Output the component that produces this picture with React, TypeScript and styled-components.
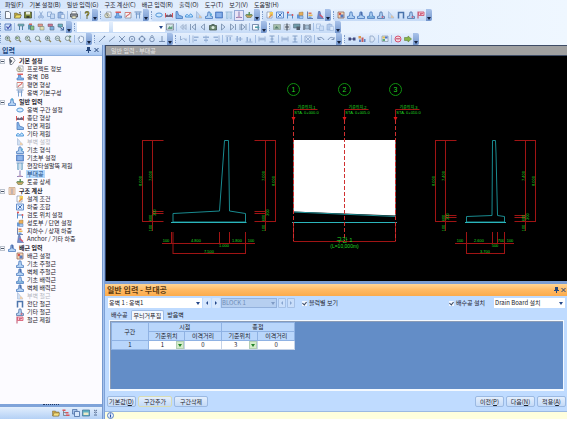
import React from "react";
import styled, { createGlobalStyle, css } from "styled-components";

const GlobalStyle = createGlobalStyle`
  * { box-sizing: border-box; }
  body { margin: 0; background: #fff; }
  body, button, input, select, table {
    font-family: "Noto Sans CJK KR", "Liberation Sans", sans-serif;
    font-size: 6px;
    color: #1c222c;
  }
  button, input, select { margin: 0; padding: 0; border: 0; background: none; }
  ul { list-style: none; margin: 0; padding: 0; }
`;

/* ---------- icons (16 x 16 grid) ---------- */

const B = "#2f66b4";
const footing = (c: string, extra?: React.ReactNode) => (
  <>
    <path d="M6 2h4l1 8 4 1v4H1v-4l4-1z" fill="#a9cdf3" stroke={c} strokeWidth="1.6" />
    {extra}
  </>
);
const lens = (extra?: React.ReactNode) => (
  <>
    <circle cx="7" cy="6.500" r="4.500" fill="#dcebe4" stroke="#5d6f78" strokeWidth="1.600" />
    <path d="M10 10l4 4" stroke="#8c7a3e" strokeWidth="2.400" />
    {extra}
  </>
);
const line = (d: string, c = "#47638c", w = 1.5) => <path d={d} fill="none" stroke={c} strokeWidth={w} />;

const drawings: Record<string, React.ReactNode> = {
  new: <path d="M3 1h7l3 3v11H3z" fill="#fff" stroke="#3d4654" strokeWidth="1.6" />,
  open: <><path d="M1 4h5l2 2h5v8H1z" fill="#b89a20" stroke="#4d4510" /><path d="M4 8h11l-3 6H1z" fill="#f4dc4c" stroke="#4d4510" /><path d="M10 3l4 1" stroke="#222" strokeWidth="1.5" /></>,
  save: <><path d="M1 2h14v12H1z" fill="#6d7818" stroke="#2b3010" strokeWidth="1.5" /><path d="M4 2h8v5H4z" fill="#e9ecd4" /><path d="M5 10h6v4H5z" fill="#20240c" /></>,
  cut: <>{line("M5 1l5 9M11 1L6 10", "#6c90c4")}<circle cx="5" cy="12" r="2" fill="none" stroke="#6c90c4" strokeWidth="1.5" /><circle cx="11" cy="12" r="2" fill="none" stroke="#6c90c4" strokeWidth="1.5" /></>,
  copy: <><path d="M1 2h8v9H1z" fill="#dce9fa" stroke="#6c90c4" strokeWidth="1.4" /><path d="M7 6h8v9H7z" fill="#c2d7f3" stroke="#6c90c4" strokeWidth="1.4" /></>,
  paste: <><path d="M2 3h10v11H2z" fill="#8fb0de" stroke="#5e84bd" strokeWidth="1.4" /><path d="M5 1h4v3H5z" fill="#5e84bd" /><path d="M8 7h7v8H8z" fill="#e4eefb" stroke="#5e84bd" /></>,
  print: <><path d="M4 1h8l1 5H3z" fill="#fff" stroke="#444" /><path d="M1 6h14v6H1z" fill="#8b8d92" stroke="#2c2d30" strokeWidth="1.5" /><path d="M4 10h8v5H4z" fill="#efe9b8" stroke="#333" /></>,
  help: <>{line("M5 5c0-5 7-4 6 0 0 2-3 3-3 6", "#2c2d08", 3.4)}{line("M5 5c0-5 7-4 6 0 0 2-3 3-3 6", "#d8c926", 1.4)}<circle cx="8" cy="14" r="1.600" fill="#45430e" /></>,
  project: <><path d="M5 2h9v11H5z" fill="#fff" stroke="#6b7280" strokeWidth="1.3" /><circle cx="6" cy="9" r="4.500" fill="#e7e6c8" stroke="#7c7a5e" strokeWidth="1.4" />{line("M6 6v3l2 1", "#345")}</>,
  wallDb: <><path d="M5 4h4l1 6h5v4H2v-4h3z" fill="#6aa5e6" stroke={B} strokeWidth="1.3" /><path d="M3 1h11v3H3z" fill="#dd4444" /></>,
  plan: <><path d="M2 3h12v11H2z" fill="#fff6f4" stroke="#6a6b74" strokeWidth="1.3" />{line("M4 12c1-6 7-2 8-8", "#cc3b3b", 2)}{line("M2 3h12", "#d46a5f", 2)}</>,
  pillars: <>{line("M1 2h14M3 6h10", "#567fb5", 2)}{line("M5 3v12M11 3v12", "#6a93c6", 2)}</>,
  ring: <ellipse cx="8" cy="8" rx="6.500" ry="4" fill="#cfeaff" stroke="#3f88d0" strokeWidth="2" />,
  profile: <><path d="M1 4v9M15 4v9" stroke="#d53838" strokeWidth="2" /><path d="M2 12V8l3-1 2 2 4-3 3 2v4z" fill="#5a4a63" /></>,
  section: <path d="M2 1h3l2 7 8 3v4H2z" fill="#77aee8" stroke={B} strokeWidth="1.6" />,
  wave: <path d="M1 12c0-6 4-6 6-3s3-5 5-3 3 3 3 6z" fill="#bfe2ff" stroke="#2e86d4" strokeWidth="2" />,
  buttress: <><path d="M3 1l11 13H3z" fill="#a9c6e8" stroke="#5c83b6" strokeWidth="1.4" /><path d="M8 8l5 3v3H8z" fill="#e0a35c" /></>,
  foot: footing(B, <path d="M10 5h4v4h-4z" fill="#49a3cf" />),
  block: <><path d="M1 2h14v12H1z" fill="#4f87da" stroke="#2d5cab" strokeWidth="1.4" /><path d="M3 6h10M3 10h10" stroke="#cbe0fa" strokeWidth="1.5" /></>,
  piles: <><path d="M1 2h14" stroke="#5b86ba" strokeWidth="2" /><path d="M3 3h3v12H3zM10 3h3v12h-3z" fill="#b7d9ee" stroke="#4d8bb4" strokeWidth="1.2" /></>,
  fixture: <>{line("M8 1v11M2 13h12", "#7a6fae", 2.2)}<path d="M5 11h6v2H5z" fill="#d08fa8" /></>,
  earth: <><path d="M1 8h14l-3 5H4z" fill="#c49a48" stroke="#5a6c35" strokeWidth="1.3" /><path d="M7 2h3v7H7z" fill="#4f8a45" /><path d="M2 7h12" stroke="#3f7a3a" strokeWidth="1.6" /></>,
  calc: <><path d="M2 1h12v14H2z" fill="#fbe5cf" stroke="#b98a62" strokeWidth="1.4" /><path d="M4 4h8M4 8h8M4 12h8" stroke="#d58556" strokeWidth="1.8" /><path d="M8 3v11" stroke="#5f86b9" strokeWidth="1.4" /></>,
  design: <><path d="M2 2h10v12H2z" fill="#fff" stroke="#667799" strokeWidth="1.3" /><path d="M7 2h7v7H7z" fill="#f2c53c" /><path d="M5 12l6-6 2 2-6 6z" fill="#dd8434" /></>,
  load: <><path d="M1 2h14v12H1z" fill="#d6e8ff" stroke="#3d70bd" strokeWidth="1.8" />{line("M4 12l8-8M5 5l6 6", "#2a5fae", 2)}</>,
  locate: <>{line("M3 2v13M13 7v8M3 8h10", "#3a7ac0", 2)}<circle cx="4" cy="3" r="2.200" fill="#dd3b3b" /><circle cx="13" cy="8" r="1.800" fill="#dd3b3b" /></>,
  embank: <><path d="M2 7h5v8H2z" fill="#4f88d0" /><path d="M6 3l8-1v7H6z" fill="#e7a23c" stroke="#91662b" /><path d="M7 10h7v5H7z" fill="#9fc4ed" stroke={B} /></>,
  water: <><path d="M3 1v14h11" fill="none" stroke="#46619a" strokeWidth="1.8" /><path d="M5 3h6v3H5z" fill="#e0633a" /><path d="M5 7h8v3H5z" fill="#edb23e" /><path d="M5 11h6v3H5z" fill="#5b96d8" /></>,
  anchor: <><path d="M5 1h3l2 9 5 5H3z" fill="#5f7fc6" stroke="#344f96" strokeWidth="1.2" />{line("M7 7l7 6", "#d93a4c", 2.2)}</>,
  rebarSet: <><path d="M2 2h12v12H2z" fill="#f6d4a8" stroke="#814f3a" strokeWidth="1.5" /><circle cx="6" cy="6" r="2.500" fill="#d23b32" /><path d="M7 7h6v6H7z" fill="#3d67b6" /></>,
  rebarA: footing(B),
  rebarB: footing(B, <path d="M7 2h3v7H7z" fill="#35579d" />),
  rebarC: footing(B, <path d="M2 12h12" stroke="#3b84b9" strokeWidth="2" />),
  rebarD: footing("#37609c", <circle cx="11" cy="12" r="2" fill="#bb5570" />),
  stirrup: <path d="M3 15V3h10v12" fill="none" stroke="#2f5e9e" strokeWidth="3" />,
  flag: <><path d="M2 1v14" stroke="#b43455" strokeWidth="2" /><path d="M3 2h11v7H3z" fill="#f5bcc7" stroke="#cf3552" strokeWidth="1.6" />{line("M6 5h6M6 7h3", "#b93253")}</>,
  wallGroup: footing(B, <path d="M7 1h3v4H7z" fill="#2a9fd0" />),
  check: <><path d="M2 2h12v12H2z" fill="#cfe0fb" stroke="#3b68b2" strokeWidth="1.8" />{line("M5 7l3 4 6-8", "#1e2f99", 2.4)}</>,
  tableT: <><path d="M2 2h12v4H2z" fill="#5ea9b2" stroke="#456" />{line("M5 6v8M11 6v8", "#3e6f93", 2)}</>,
  sheetG: <><path d="M2 3h8v10H2z" fill="#4b86a6" /><path d="M7 6h7v8H7z" fill="#7ec06d" stroke="#344" /><path d="M4 1h6v3H4z" fill="#cc5148" /></>,
  sheetR: <><path d="M2 2h9v5H2z" fill="#de8a7b" stroke="#743" /><path d="M6 7h8v7H6z" fill="#e4dfa8" stroke="#565" /></>,
  sheetP: <><path d="M2 2h9v5H2z" fill="#c4647e" stroke="#634" /><path d="M6 7h8v7H6z" fill="#71a5d8" stroke="#345" /></>,
  sheetB: <><path d="M2 2h9v6H2z" fill="#56a7b4" stroke="#345" />{line("M5 8l8 6M13 8v6H7", "#2f5590", 2)}</>,
  picture: <><path d="M1 2h14v12H1z" fill="#d9e8e9" stroke="#667" strokeWidth="1.4" /><path d="M3 12l4-6 3 3 3-5v8z" fill="#4c9168" /></>,
  rewind: line("M14 3L9 8l5 5zM8 3L3 8l5 5z", "#8297b5"),
  first: line("M13 2L6 8l7 6zM3 2v12", "#60789b", 1.6),
  prev: line("M11 2L4 8l7 6z", "#60789b", 1.6),
  next: line("M5 2l7 6-7 6z", "#60789b", 1.6),
  last: line("M3 2l7 6-7 6zM13 2v12", "#60789b", 1.6),
  step: line("M2 2v12M5 2l7 6-7 6zM14 2v12", "#60789b", 1.6),
  camera: <><path d="M1 5h14v9H1z" fill="#5b7a58" stroke="#26382c" strokeWidth="1.5" /><path d="M5 2h6v3H5z" fill="#3f5a46" /><circle cx="8" cy="9" r="3" fill="#dfeee0" /></>,
  export: <><path d="M1 3h12v11H1z" fill="#fff" stroke="#47638c" strokeWidth="1.6" /><path d="M6 7h5V4l4 5-4 4v-3H6z" fill="#3c8f9b" /></>,
  viewA: <><path d="M1 3h14v10H1z" fill="#9bb79d" stroke="#66766a" /><path d="M3 11l4-5 5 5z" fill="#416c57" /></>,
  viewB: <><path d="M2 3h12v10H2z" fill="#d6dde4" stroke="#8896a4" />{line("M8 1v14M4 8h8", "#333b46", 2.4)}</>,
  viewC: <><path d="M1 2h13v8H1z" fill="#5f8f9c" stroke="#345" /><path d="M7 7h7v7H7z" fill="#3c4753" /></>,
  viewD: <>{line("M2 2v12M14 2v12", "#333f4e", 2.4)}<path d="M4 4h8v8H4z" fill="#9db9cf" stroke="#456" /></>,
  zoomFit: lens(line("M4 6h6M7 4v5", "#47614a")),
  zoomWin: lens(<path d="M4 4h5v4H4z" fill="#7c9a6c" />),
  zoomPrev: lens(line("M9 4L5 6l4 3", "#47614a")),
  zoom: lens(),
  zoomIn: lens(line("M4.5 6.500h5M7 4v5", "#3b5560")),
  zoomOut: lens(line("M4.5 6.500h5", "#3b5560")),
  zoomDyn: lens(<path d="M10 1l5 1-3 4z" fill="#3d6b40" />),
  hand: <path d="M3 9L2 6l2-1 1 2V3l2-1 1 1 2-1 1 2h2v7l-3 4H6z" fill="#eef4fc" stroke="#62799b" strokeWidth="1.3" />,
  lineEnd: <>{line("M2 14L13 3", "#47638c")}<circle cx="13" cy="3" r="1.500" fill="#47638c" /></>,
  lineMid: line("M2 13L14 3"),
  cross: line("M2 2l12 12M14 2L2 14"),
  circleC: <><circle cx="8" cy="8" r="5.500" fill="none" stroke="#47638c" strokeWidth="1.500" /><circle cx="8" cy="8" r="1.500" fill="#47638c" /></>,
  circleQ: <><circle cx="8" cy="8" r="5" fill="none" stroke="#47638c" strokeWidth="1.500" />{line("M8 1v3M8 12v3M1 8h3M12 8h3", "#47638c", 2)}</>,
  tangent: <><circle cx="8" cy="9" r="4.500" fill="none" stroke="#47638c" strokeWidth="1.500" />{line("M5 3l3-2 3 2")}</>,
  perp: line("M8 2v11M2 13h12"),
  snap: line("M3 2v8l4-2M9 6l5 5v-4", "#7593bd"),
  alignL: <>{line("M2 1v14", "#7d9ac4")}<path d="M4 3h9v3H4zM4 9h6v3H4z" fill="#8ca9d3" /></>,
  alignC: <>{line("M8 1v14", "#7d9ac4")}<path d="M2 3h12v3H2zM4 9h8v3H4z" fill="#8ca9d3" /></>,
  alignR: <>{line("M14 1v14", "#7d9ac4")}<path d="M3 3h9v3H3zM6 9h6v3H6z" fill="#8ca9d3" /></>,
  alignT: <>{line("M1 2h14", "#7d9ac4")}<path d="M3 4h3v10H3zM9 4h3v7H9z" fill="#8ca9d3" /></>,
  alignM: <>{line("M1 8h14", "#7d9ac4")}<path d="M3 2h3v12H3zM9 4h3v8H9z" fill="#8ca9d3" /></>,
  alignB: <>{line("M1 14h14", "#7d9ac4")}<path d="M3 4h3v9H3zM9 7h3v6H9z" fill="#8ca9d3" /></>,
  spanH: line("M2 3v10M14 3v10M2 8h12M6 5v6M10 5v6", "#7d9ac4", 1.6),
  spanV: line("M3 2h10M3 14h10M8 2v12M5 8h6", "#6c8cba", 1.8),
  extents: <><path d="M2 2h12v12H2z" fill="none" stroke="#7d9ac4" strokeWidth="1.600" />{line("M4 4l8 8M12 4l-8 8", "#7d9ac4")}</>,
  undo: line("M2 8c3-5 9-4 12 2M2 4v5h5", "#7089b0", 2),
  redo: line("M14 8c-3-5-9-4-12 2M14 4v5H9", "#7089b0", 2),
  link: <><path d="M1 5h5v6H1zM10 5h5v6h-5z" fill="#27306c" />{line("M5 8h6", "#27306c", 2)}</>,
  layers: <><path d="M1 2h5v5H1z" fill="#de8d32" /><path d="M7 5h4v9H7z" fill="#c24545" /><path d="M2 9h4v5H2zM12 8h3v6h-3z" fill="#4b72ba" /></>,
  copyPage: <path d="M4 2h6l4 6-4 6H4z" fill="#dbe6f5" stroke="#8199bd" strokeWidth="1.6" />,
  palette: <><path d="M2 2h12v11H2z" fill="#e9eef7" stroke="#567" /><path d="M3 3h5v4H3z" fill="#e4bc39" /><path d="M8 3h5v4H8z" fill="#3b66c0" /><path d="M3 8h5v4H3z" fill="#4da264" /></>,
  stop: <><circle cx="8" cy="8" r="6" fill="#fbd3da" stroke="#d63c5c" strokeWidth="2" />{line("M4 9l2-3 2 3 2-3 2 3", "#b42f50", 1.6)}</>,
  go: <path d="M1 5h7V2l7 6-7 6v-3H1z" fill="#7cae28" stroke="#4d721b" strokeWidth="1.2" />,
  note: <><path d="M4 1h6l4 6-6 8H4z" fill="#fff" stroke="#4a5260" strokeWidth="1.5" /><path d="M2 2l7 6-5 6z" fill="#39424f" /></>,
  folder: <><path d="M1 4h6l1 2h6v8H1z" fill="#c99b28" stroke="#6b5418" /><path d="M4 8h11l-2 6H2z" fill="#ffe066" stroke="#6b5418" /></>,
  tree: <>{line("M3 2v11h8M3 7h6", "#555", 1.4)}<path d="M1 1h6v3H1zM7 6h6v3H7zM8 11h7v3H8z" fill="#dd3f3f" /></>,
  stack: <><path d="M1 1h9v9H1z" fill="#9dbde8" stroke="#2f5693" strokeWidth="1.4" /><path d="M5 5h10v10H5z" fill="#d9e8fb" stroke="#2f5693" strokeWidth="1.6" /></>,
  pane: <><path d="M1 2h14v12H1z" fill="#4ba8b8" stroke="#2b5d84" strokeWidth="1.4" /><path d="M3 7h10v5H3z" fill="#f2ecc0" /></>,
  more: line("M4 2l3 2 3-2M4 6l3 2 3-2M4 12h6", "#223a66", 1.6),
};

const Svg = styled.svg<{ $faded?: boolean }>`
  width: 8px;
  height: 8px;
  flex: none;
  display: block;
  opacity: ${(p) => (p.$faded ? 0.5 : 0.85)};
`;

const Icon = ({ name, faded }: { name: string; faded?: boolean }) => (
  <Svg viewBox="0 0 16 16" $faded={faded} aria-hidden="true">
    {drawings[name]}
  </Svg>
);

/* ---------- frame ---------- */

const Shell = styled.div`
  display: flex;
  flex-direction: column;
  height: 100vh;
  padding-bottom: 4px;
  overflow: hidden;
`;
const Top = styled.header`
  background: linear-gradient(90deg, #d3e4fb, #e6f1fe 45%, #eff7ff);
`;
const Menu = styled.nav`
  display: flex;
  gap: 6px;
  height: 9px;
  padding-left: 5px;
`;
const MenuItem = styled.button`
  height: 9px;
  line-height: 9px;
  white-space: nowrap;
`;
const ToolRow = styled.div`
  display: flex;
  gap: 2px;
  height: 12px;
`;
const ToolGroup = styled.div`
  display: flex;
  align-items: center;
  height: 12px;
  background: linear-gradient(#e6f0fd, #d3e4fa 60%, #c5daf6);
  border-radius: 2px;
`;
const Grip = styled.span`
  width: 3px;
  height: 8px;
  border-left: 1px dotted #7f9cc9;
`;
const Tool = styled.button<{ $on?: boolean }>`
  display: grid;
  place-items: center;
  width: 10px;
  height: 11px;
  ${(p) => p.$on && css`background: #e9e4f6; outline: 1px solid #93a9d6; outline-offset: -1px;`}
`;
const Sep = styled.span`
  width: 1px;
  height: 8px;
  margin: 0 1px;
  background: #a5bfe4;
`;
const Cap = styled.button`
  width: 6px;
  height: 12px;
  display: flex;
  align-items: flex-end;
  justify-content: center;
  padding-bottom: 1px;
  background: linear-gradient(#a9c3ea, #7396cd);
  border-radius: 0 2px 2px 0;
`;
const Arrow = styled.svg`
  width: 4px;
  height: 3px;
  display: block;
`;
const ToolField = styled.input`
  width: 32px;
  height: 10px;
  background: #fff;
  margin-right: 4px;
`;

const Down = ({ fill = "#16233f" }: { fill?: string }) => (
  <Arrow viewBox="0 0 4 3" aria-hidden="true"><path d="M0 0h4L2 3z" fill={fill} /></Arrow>
);

const SelectWrap = styled.span<{ $w?: number; $off?: boolean }>`
  position: relative;
  display: flex;
  align-items: center;
  flex: ${(p) => (p.$w ? `0 0 ${p.$w}px` : "1")};
  height: 10px;
  background: ${(p) => (p.$off ? "#b6cff0" : "#fff")};
  ${(p) => p.$off && css`box-shadow: inset 0 0 0 1px #93b1dc;`}
  & > svg { position: absolute; right: 2px; pointer-events: none; }
`;
const Select = styled.select`
  appearance: none;
  width: 100%;
  height: 10px;
  padding: 0 1px;
  line-height: 10px;
  &:disabled { color: #6f8db8; opacity: 1; }
`;

const Drop = ({ label, value, w, off }: { label: string; value: string; w?: number; off?: boolean }) => (
  <SelectWrap $w={w} $off={off}>
    <Select aria-label={label} disabled={off}><option>{value}</option></Select>
    <Down fill={off ? "#7f9bc6" : "#25488a"} />
  </SelectWrap>
);

const menus = ["파일(F)", "기본 설정(B)", "일반 입력(G)", "구조 계산(C)", "배근 입력(R)", "출력(O)", "도구(T)", "보기(V)", "도움말(H)"];

/* "|" is a separator, "*" a disabled tool, "!" a pressed one */
const toolRows: string[][] = [
  [
    "new open save | cut copy paste | print | help",
    "project wallDb plan pillars",
    "ring profile section wave buttress* foot block piles* fixture! earth",
    "design load locate embank water anchor",
    "rebarSet rebarA rebarB rebarC rebarD buttress* stirrup rebarD flag",
  ],
  [
    "check | tableT sheetG sheetR sheetP sheetB",
    "@fields picture | rewind first prev camera next last step | export",
    "viewA viewB viewC viewD | copy* paste*",
  ],
  [
    "zoomFit zoomWin zoomPrev zoom zoomIn zoomOut zoomDyn | hand",
    "lineEnd lineMid cross circleC circleQ tangent perp",
    "snap | alignL alignC alignR | alignT alignM alignB | spanH spanV | spanH spanV | extents | undo redo",
    "link layers copyPage | palette | stop go",
  ],
];

const Tools = ({ spec }: { spec: string }) => (
  <ToolGroup role="toolbar">
    <Grip />
    {spec.split(" ").map((token, i) => {
      if (token === "|") return <Sep key={i} />;
      if (token === "@fields")
        return (
          <React.Fragment key={i}>
            <ToolField aria-label="검색" />
            <Drop label="목록" value="" w={52} />
          </React.Fragment>
        );
      const name = token.replace(/[*!]/, "");
      return (
        <Tool key={i} aria-label={name} $on={token.endsWith("!")} disabled={token.endsWith("*")}>
          <Icon name={name} faded={token.endsWith("*")} />
        </Tool>
      );
    })}
    <Cap aria-label="도구 옵션"><Down /></Cap>
  </ToolGroup>
);

const Body = styled.div`
  display: flex;
  flex: 1;
  min-height: 0;
`;

/* ---------- sidebar ---------- */

const Sidebar = styled.aside`
  display: flex;
  flex-direction: column;
  width: 102px;
  flex: none;
`;
const SideHead = styled.h2`
  display: flex;
  align-items: center;
  gap: 3px;
  height: 11px;
  margin: 0;
  padding: 0 3px 0 2px;
  font-size: 7px;
  line-height: 10px;
  color: #23487f;
  background: linear-gradient(#dbe9fc, #a9c8f2);
  border-bottom: 1px solid #8fb0df;
  & > span { flex: 1; }
`;
const Mini = styled.button`
  width: 5px;
  height: 9px;
  display: grid;
  place-items: center;
  & > svg { width: 5px; height: 6px; display: block; }
`;
const PinClose = () => (
  <>
    <Mini aria-label="고정"><svg viewBox="0 0 5 6"><path d="M1 0h3v3H1zM0 3h5v1H0zM2 4h1v2H2z" fill="#24467c" /></svg></Mini>
    <Mini aria-label="닫기"><svg viewBox="0 0 5 6"><path d="M.5 1l4 4M4.500 1l-4 4" stroke="#24467c" /></svg></Mini>
  </>
);
const Tree = styled.div`
  flex: 1;
  padding-top: 1px;
  background: #fcfbff;
`;
const Branch = styled.section`
  margin-bottom: 1px;
`;
const BranchHead = styled.h3`
  display: flex;
  align-items: center;
  gap: 3px;
  height: 8px;
  margin: 0;
  font-size: 6px;
  line-height: 8px;
`;
const Fold = styled.button`
  display: block;
  width: 5px;
  height: 5px;
  border: 1px solid #bcc3ce;
  background: linear-gradient(#4a5566, #4a5566) center / 3px 1px no-repeat;
`;
const Leaf = styled.li<{ $off?: boolean; $on?: boolean }>`
  display: flex;
  align-items: center;
  gap: 2px;
  height: 8px;
  padding-left: 16px;
  & > button {
    height: 8px;
    padding: 0 1px;
    line-height: 8px;
    white-space: pre;
    ${(p) => p.$off && css`color: #b5b7bf;`}
    ${(p) => p.$on && css`background: #b5d8fb; color: #14427c;`}
  }
`;
const SideGrip = styled.div`
  display: flex;
  justify-content: center;
  height: 3px;
  background: #7fa3d9;
  &::after { content: ""; width: 16px; border-top: 1px dotted #223a66; }
`;
const SideFoot = styled.div`
  display: flex;
  align-items: center;
  justify-content: flex-end;
  height: 12px;
  padding-right: 1px;
  background: linear-gradient(#e2eefd, #b4d0f5);
`;

type Item = [string, string, ("off" | "on")?];
const tree: { icon: string; title: string; items: Item[] }[] = [
  { icon: "note", title: "기본 설정", items: [["project", "프로젝트 정보"], ["wallDb", "옹벽  DB"], ["plan", "평면 형상"], ["pillars", "옹벽 기본구성"]] },
  {
    icon: "wallGroup", title: "일반 입력", items: [
      ["ring", "옹벽 구간 설정"], ["profile", "종단 형상"], ["section", "단면 제원"], ["wave", "기타 제원"],
      ["buttress", "부벽 설정", "off"], ["foot", "기초 형식"], ["block", "기초부 설정"],
      ["piles", "현장타설말뚝 제원"], ["fixture", "부대공", "on"], ["earth", "토공 상세"],
    ],
  },
  {
    icon: "calc", title: "구조 계산", items: [
      ["design", "설계 조건"], ["load", "하중 조합"], ["locate", "검토 위치 설정"],
      ["embank", "성토부 / 단면 설정"], ["water", "지하수 / 상재 하중"], ["anchor", "Anchor / 기타 하중"],
    ],
  },
  {
    icon: "rebarB", title: "배근 입력", items: [
      ["rebarSet", "배근 설정"], ["rebarA", "기초 주철근"], ["rebarB", "벽체 주철근"], ["rebarC", "기초 배력근"],
      ["rebarB", "벽체 배력근"], ["buttress", "부벽 철근", "off"], ["stirrup", "전단 철근"], ["rebarD", "기타 철근"], ["flag", "철근 제원"],
    ],
  },
];

const Divider = styled.div`
  width: 3px;
  flex: none;
  background: linear-gradient(90deg, #5f84bf, #a5c3ee 50%, #6c92cd);
`;

/* ---------- drawing area ---------- */

const Main = styled.main`
  display: flex;
  flex-direction: column;
  flex: 1;
  min-width: 0;
`;
const ViewTitle = styled.h1`
  height: 11px;
  margin: 0;
  padding-left: 5px;
  font-size: 6px;
  font-weight: 400;
  line-height: 9px;
  color: #e6e6e6;
  background: #a0a0a0;
  border: solid #3e4c66;
  border-width: 1px 0 1px 1px;
`;
const Viewport = styled.div`
  flex: 1;
  min-height: 0;
  background: #000;
  border-left: 1px solid #2c3f66;
  & > svg { display: block; width: 100%; height: 100%; }
  text { font-family: "Liberation Sans", "Noto Sans CJK KR", sans-serif; fill: #22dc22; text-anchor: middle; }
`;

const RED = "#a01414";
const T = ({ x, y, s = 4, up, children }: { x: number; y: number; s?: number; up?: boolean; children: React.ReactNode }) => (
  <text x={x} y={y} fontSize={s} transform={up ? `rotate(-90 ${x} ${y})` : undefined}>{children}</text>
);

/* height dimension chain on one side of a wall section; dir points from the outer line to the wall */
const HeightDims = ({ outer, dir, heel, main }: { outer: number; dir: 1 | -1; heel: number; main: string }) => {
  const inner = outer + 10 * dir;
  const end = outer + 21 * dir;
  const left = Math.min(outer, inner);
  const right = Math.max(outer, inner);
  const outerText = dir === 1 ? left - 1 : right - 1;
  const innerText = dir === 1 ? right - 1 : left - 1;
  return (
    <g>
      <path d={`M${outer} 140V222M${inner} 140V231M${outer} 140.500H${end}M${inner} ${heel}H${end}M${inner} ${heel + 2}H${end}M${outer} 221.500H${end}`} stroke={RED} fill="none" />
      <T x={outerText} y={181} up>8.000</T>
      <T x={innerText} y={176} up>{main}</T>
      <T x={innerText + 4} y={heel + 1} up>200</T>
      <T x={innerText} y={218} up>600</T>
      <T x={innerText} y={228} up>100</T>
    </g>
  );
};

const Station = ({ x, n, sta }: { x: number; n: number; sta: string }) => (
  <g>
    <circle cx={x} cy="89.500" r="6" fill="none" stroke="#0f8f0f" />
    <T x={x} y={92} s={7}>{n}</T>
    <path d={`M${x} 118V109.500H${x + 24}`} stroke={RED} fill="none" />
    <path d={`M${x - 2} 117h4l-2 4z`} fill="#e01818" />
    <path d={`M${x} 120V241`} stroke="#d03030" strokeDasharray="4 2" />
    <T x={x + 13} y={109}>기준위치.{n}</T>
    <T x={x + 13} y={114}>{sta}</T>
  </g>
);

const WallDrawing = () => (
  <svg viewBox="106 56 461 225" role="img" aria-label="옹벽 단면도">
    <HeightDims outer={142.5} dir={1} heel={211.5} main="7.000" />
    <HeightDims outer={275.5} dir={-1} heel={211.5} main="7.000" />
    <path d="M224.500 140.500H228.500L229.500 211L245.500 213.500V222H173V213.500L219.500 211Z" fill="none" stroke="#198a8f" />
    <path d="M171 222.500H246.500" stroke="#2bb5bb" />
    <path d="M162 243.500H255M173 253.500H245.500M171.500 232v12M173 232v22M219.500 232v12M229.500 232v12M245.500 232v22" stroke={RED} fill="none" />
    <T x={166} y={242}>100</T><T x={196} y={242}>4.800</T><T x={224} y={247}>1.000</T>
    <T x={237} y={242}>1.800</T><T x={251} y={242}>100</T><T x={209} y={253}>7.500</T>

    <path d="M293.500 140H395.500V215.500L293.500 211.500Z" fill="#fff" />
    <path d="M293 212L396 216.500" stroke="#1f8f95" />
    <path d="M292 222.500H397" stroke="#2bb5bb" />
    <path d="M293.500 222V241.500H395.500V222" stroke={RED} fill="none" />
    <Station x={293.5} n={1} sta="STA. 0+000.0" />
    <Station x={344.5} n={2} sta="STA. 0+005.0" />
    <Station x={395.5} n={3} sta="STA. 0+010.0" />
    <T x={344.5} y={242} s={6}>구간 1</T>
    <T x={344.5} y={248} s={5}>(L=10,000m)</T>

    <HeightDims outer={435.5} dir={1} heel={215.5} main="7.400" />
    <HeightDims outer={535.5} dir={-1} heel={215.5} main="7.400" />
    <path d="M492.500 140.500H495.500L496 153L497.500 215.500L504.500 216.500V222H466.500V216.500L492 215.500Z" fill="none" stroke="#198a8f" />
    <path d="M465 222.500H506" stroke="#2bb5bb" />
    <path d="M455 243.500H514M466.500 253.500H504.500M466.500 232v22M492.500 232v12M497.500 232v12M504.500 232v22" stroke={RED} fill="none" />
    <T x={460} y={242}>100</T><T x={479} y={242}>2.600</T><T x={495} y={247}>500</T>
    <T x={501} y={242}>700</T><T x={510} y={242}>100</T><T x={485} y={253}>3.700</T>
  </svg>
);

/* ---------- input dock ---------- */

const Dock = styled.section`
  display: flex;
  flex-direction: column;
  background: #bfdbff;
  border-top: 3px solid #7b9dd3;
`;
const DockHead = styled.h2`
  display: flex;
  align-items: center;
  gap: 2px;
  height: 12px;
  margin: 0;
  padding: 0 1px 0 2px;
  font-size: 8px;
  line-height: 12px;
  color: #5a3a12;
  background: linear-gradient(#ffd596, #ffb963 50%, #fbab4c);
  & > span { flex: 1; }
`;
const FormRow = styled.div`
  display: flex;
  align-items: center;
  gap: 1px;
  height: 14px;
  padding: 0 2px 0 3px;
`;
const Space = styled.span<{ $w?: number }>`
  flex: ${(p) => (p.$w ? `0 0 ${p.$w}px` : "1")};
`;
const Nudge = styled.button<{ $boxed?: boolean }>`
  display: grid;
  place-items: center;
  width: 8px;
  height: 10px;
  border-radius: 1px;
  background: ${(p) => (p.$boxed ? "#c9defa" : "#d6e7fd")};
  ${(p) => p.$boxed && css`box-shadow: inset 0 0 0 1px #a5c0e6;`}
  & > svg { width: 2px; height: 4px; display: block; }
`;
const NudgePair = ({ boxed }: { boxed?: boolean }) => {
  const c = boxed ? "#88a5d0" : "#25488a";
  return (
    <>
      <Nudge aria-label="이전 항목" disabled={boxed} $boxed={boxed}><svg viewBox="0 0 2 4"><path d="M2 0v4L0 2z" fill={c} /></svg></Nudge>
      <Nudge aria-label="다음 항목" disabled={boxed} $boxed={boxed}><svg viewBox="0 0 2 4"><path d="M0 0v4l2-2z" fill={c} /></svg></Nudge>
    </>
  );
};
const CheckLabel = styled.label`
  display: flex;
  align-items: center;
  gap: 2px;
  line-height: 10px;
  white-space: nowrap;
`;
const Check = styled.input`
  appearance: none;
  display: grid;
  place-items: center;
  width: 5px;
  height: 5px;
  background: #f2f7ff;
  &:checked::after {
    content: "";
    width: 2px;
    height: 3px;
    border: solid #3a4a66;
    border-width: 0 1px 1px 0;
    transform: rotate(40deg);
  }
`;
const Tabs = styled.div`
  display: flex;
  gap: 1px;
  height: 10px;
  padding-left: 4px;
`;
const Tab = styled.button<{ $on?: boolean }>`
  height: 10px;
  padding: 0 2px;
  line-height: 10px;
  ${(p) => p.$on && css`
    background: #f3f8ff;
    border: 1px solid #9dbbe6;
    border-bottom: 0;
    line-height: 9px;
    border-radius: 2px 2px 0 0;
  `}
`;
const GridBox = styled.div`
  min-height: 71px;
  margin: 0 3px 0 4px;
  background: #638dc7;
  border: solid #f4f9ff;
  border-width: 1px 1px 2px;
  box-shadow: inset 1px 1px 0 #8a9bb5;
  padding: 1px 0 0 1px;
`;
const Grid = styled.table`
  border-collapse: collapse;
  table-layout: fixed;
  width: 184px;
  th, td {
    height: 9px;
    padding: 0;
    border: 1px solid #8fb2e3;
    line-height: 8px;
    text-align: center;
    font-weight: 400;
    background: #b9d6fb;
  }
  td { background: #fff; border-color: #c5d3e8; }
`;
const CellPick = styled.span`
  position: relative;
  display: flex;
  align-items: center;
  height: 8px;
  & > select {
    appearance: none;
    width: 28px;
    height: 8px;
    line-height: 8px;
    text-align: center;
    text-align-last: center;
  }
  & > i {
    display: grid;
    place-items: center;
    width: 8px;
    height: 8px;
    background: #d4ecc9;
    border: 1px solid #b3cfb4;
  }
`;
const CellInput = styled.input`
  display: block;
  width: 100%;
  height: 8px;
  line-height: 8px;
  text-align: center;
`;
const Actions = styled.div`
  display: flex;
  gap: 2px;
  padding: 5px 1px 4px 2px;
`;
const Action = styled.button<{ $wide?: boolean; $hot?: boolean }>`
  min-width: ${(p) => (p.$wide ? 34 : 29)}px;
  height: 11px;
  line-height: 9px;
  white-space: nowrap;
  border: 1px solid ${(p) => (p.$hot ? "#d8dcb4" : "#9bb9e2")};
  border-radius: 2px;
  background: linear-gradient(#e4effd, #c4daf7);
`;
const Status = styled.footer`
  display: flex;
  align-items: center;
  height: 8px;
  padding-left: 2px;
  background: #ffffdd;
  border-top: 1px solid #9bb9e2;
  & > svg { width: 7px; height: 7px; display: block; }
`;

const Pick = ({ label, value }: { label: string; value: string }) => (
  <CellPick>
    <select aria-label={label}><option>{value}</option></select>
    <i><Down fill="#23852a" /></i>
  </CellPick>
);

export default function App() {
  return (
    <Shell>
      <GlobalStyle />
      <Top>
        <Menu>{menus.map((m) => <MenuItem key={m}>{m}</MenuItem>)}</Menu>
        {toolRows.map((row, i) => (
          <ToolRow key={i}>{row.map((spec) => <Tools key={spec} spec={spec} />)}</ToolRow>
        ))}
      </Top>
      <Body>
        <Sidebar>
          <SideHead><span>입력</span><PinClose /></SideHead>
          <Tree>
            {tree.map((b) => (
              <Branch key={b.title}>
                <BranchHead><Fold aria-label="접기" /><Icon name={b.icon} />{b.title}</BranchHead>
                <ul>
                  {b.items.map(([icon, label, state]) => (
                    <Leaf key={label} $off={state === "off"} $on={state === "on"}>
                      <Icon name={icon} faded={state === "off"} />
                      <button disabled={state === "off"}>{label}</button>
                    </Leaf>
                  ))}
                </ul>
              </Branch>
            ))}
          </Tree>
          <SideGrip />
          <SideFoot>
            {["folder", "tree", "stack", "pane", "more"].map((n) => <Tool key={n} aria-label={n}><Icon name={n} /></Tool>)}
          </SideFoot>
        </Sidebar>
        <Divider />
        <Main>
          <ViewTitle>일반 입력 - 부대공</ViewTitle>
          <Viewport><WallDrawing /></Viewport>
          <Dock>
            <DockHead><span>일반 입력 - 부대공</span><PinClose /></DockHead>
            <FormRow>
              <Drop label="옹벽" value="옹벽 1 : 옹벽1" w={94} />
              <NudgePair />
              <Drop label="블럭" value="BLOCK  1" w={56} off />
              <NudgePair boxed />
              <Space $w={5} />
              <CheckLabel><Check type="checkbox" defaultChecked />블럭별 보기</CheckLabel>
              <Space />
              <CheckLabel><Check type="checkbox" defaultChecked />배수공 설치</CheckLabel>
              <Space $w={7} />
              <Drop label="배수재" value="Drain Board 설치" w={71} />
            </FormRow>
            <Tabs role="tablist">
              <Tab role="tab">배수공</Tab>
              <Tab role="tab" aria-selected $on>무늬거푸집</Tab>
              <Tab role="tab">방음벽</Tab>
            </Tabs>
            <GridBox>
              <Grid>
                <thead>
                  <tr><th rowSpan={2}>구간</th><th colSpan={2}>시점</th><th colSpan={2}>종점</th></tr>
                  <tr><th>기준위치</th><th>이격거리</th><th>기준위치</th><th>이격거리</th></tr>
                </thead>
                <tbody>
                  <tr>
                    <th scope="row">1</th>
                    <td><Pick label="시점 기준위치" value="1" /></td>
                    <td><CellInput aria-label="시점 이격거리" defaultValue="0" /></td>
                    <td><Pick label="종점 기준위치" value="3" /></td>
                    <td><CellInput aria-label="종점 이격거리" defaultValue="0" /></td>
                  </tr>
                </tbody>
              </Grid>
            </GridBox>
            <Actions>
              <Action>기본값(<u>D</u>)</Action>
              <Action $wide $hot>구간추가</Action>
              <Action $wide>구간삭제</Action>
              <Space />
              <Action>이전(<u>P</u>)</Action>
              <Action>다음(<u>N</u>)</Action>
              <Action>적용(<u>A</u>)</Action>
            </Actions>
          </Dock>
          <Status>
            <svg viewBox="0 0 14 14" aria-hidden="true">
              <circle cx="7" cy="7" r="6" fill="#e8f1ff" stroke="#3a68b8" strokeWidth="1.6" />
              <path d="M7 6v5M7 3v2" stroke="#2450a8" strokeWidth="2.2" />
            </svg>
          </Status>
        </Main>
      </Body>
    </Shell>
  );
}
